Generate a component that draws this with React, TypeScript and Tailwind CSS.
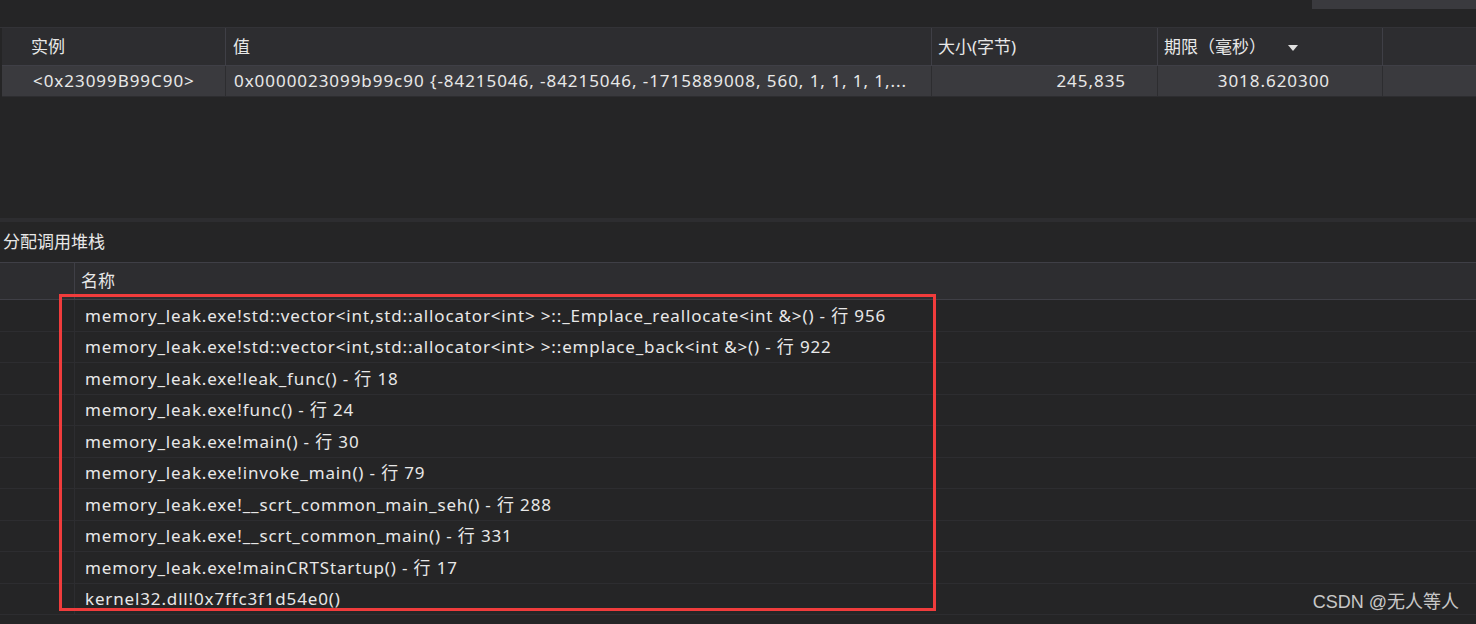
const font = "font-['Noto_Sans','Noto_Sans_CJK_SC',sans-serif]";

const stack = [
  "memory_leak.exe!std::vector<int,std::allocator<int> >::_Emplace_reallocate<int &>() - 行 956",
  "memory_leak.exe!std::vector<int,std::allocator<int> >::emplace_back<int &>() - 行 922",
  "memory_leak.exe!leak_func() - 行 18",
  "memory_leak.exe!func() - 行 24",
  "memory_leak.exe!main() - 行 30",
  "memory_leak.exe!invoke_main() - 行 79",
  "memory_leak.exe!__scrt_common_main_seh() - 行 288",
  "memory_leak.exe!__scrt_common_main() - 行 331",
  "memory_leak.exe!mainCRTStartup() - 行 17",
  "kernel32.dll!0x7ffc3f1d54e0()",
];

export default function App() {
  return (
    <div className={`w-[1476px] h-[624px] overflow-hidden bg-[#252526] text-[#e8e8e8] text-[17px] ${font} relative`}>
      {/* toolbar strip */}
      <div className="h-[28px] flex justify-end border-b border-[#333337]">
        <div className="w-[164px] h-[9px] bg-[#3a3a3e]" />
      </div>

      {/* instances table */}
      <div className="flex h-[38px] bg-[#2d2d30] border-b border-[#3f3f46] ml-[2px]">
        <div className="w-[224px] pl-[29px] flex items-center border-r border-[#3f3f46]">实例</div>
        <div className="w-[706px] pl-[7px] flex items-center border-r border-[#3f3f46]">值</div>
        <div className="w-[226px] pl-[6px] flex items-center border-r border-[#3f3f46]">大小(字节)</div>
        <div className="w-[225px] pl-[6px] flex items-center border-r border-[#3f3f46]">
          期限（毫秒）
          <svg width="12" height="8" viewBox="0 0 12 8" className="ml-[21px] mt-[2px]">
            <path d="M1 1 L11 1 L6 7 Z" fill="#e0e0e0" />
          </svg>
        </div>
        <div className="flex-1" />
      </div>
      <div className="flex h-[31px] bg-[#3a3a3e] ml-[2px] border-b border-[#2d2d30] tracking-[0.95px]">
        <div className="w-[224px] pl-[31px] flex items-center border-r border-[#2d2d30]">&lt;0x23099B99C90&gt;</div>
        <div className="w-[706px] pl-[8px] flex items-center border-r border-[#2d2d30] whitespace-nowrap overflow-hidden">
          0x0000023099b99c90 {"{"}-84215046, -84215046, -1715889008, 560, 1, 1, 1, 1,...
        </div>
        <div className="w-[226px] pr-[31px] flex items-center justify-end border-r border-[#2d2d30]">245,835</div>
        <div className="w-[225px] pr-[52px] flex items-center justify-end border-r border-[#2d2d30]">3018.620300</div>
        <div className="flex-1" />
      </div>

      <div className="h-[121px]" />
      <div className="h-[4px] bg-[#2d2d30]" />

      {/* call stack */}
      <div className="h-[40px] pl-[3px] flex items-center">分配调用堆栈</div>
      <div className="flex h-[38px] bg-[#2d2d30] border-y border-[#3f3f46]">
        <div className="w-[75px] border-r border-[#3f3f46]" />
        <div className="flex-1 pl-[6px] flex items-center">名称</div>
      </div>
      <div className="relative">
        {stack.map((s, i) => (
          <div key={i} className="flex h-[31.5px] border-b border-[#2d2d30]">
            <div className="w-[75px] border-r border-[#2d2d30]" />
            <div className="flex-1 pl-[10px] flex items-center whitespace-nowrap tracking-[0.85px]">{s}</div>
          </div>
        ))}
        <div className="absolute left-[59px] top-[-6px] w-[877px] h-[317px] border-[3px] border-[#f03c3c] pointer-events-none" />
      </div>

      <div className="absolute right-[17px] bottom-[8px] text-[18px] text-[#c8c8c8] font-['Liberation_Sans','Noto_Sans_CJK_SC',sans-serif]">
        CSDN @无人等人
      </div>
    </div>
  );
}
